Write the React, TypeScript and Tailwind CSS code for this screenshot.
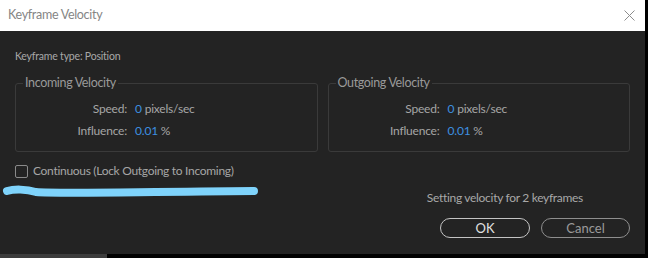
import React from 'react';

const font = { fontFamily: 'Lato, "Noto Sans", sans-serif' };

const VelocityGroup: React.FC<{ title: string }> = ({ title }) => (
  <fieldset className="w-[303px] h-[76px] border border-[#3a3a3a] rounded-[3px] px-[8px]">
    <legend className="px-[2px] ml-[-1px] text-[12.5px] leading-[14px] tracking-[-0.35px] text-[#9a9a9a]">{title}</legend>
    <div className="grid grid-cols-[103px_1fr] gap-x-[8px] gap-y-[5px] mt-[10px] text-[12px] leading-[17px] tracking-[-0.2px]">
      <span className="text-right text-[#a6a6a6]">Speed:</span>
      <span className="text-[#a6a6a6]">
        <span className="text-[#3d8fe0]">0</span> pixels/sec
      </span>
      <span className="text-right text-[#a6a6a6]">Influence:</span>
      <span className="text-[#a6a6a6]">
        <span className="text-[#3d8fe0]">0.01</span> %
      </span>
    </div>
  </fieldset>
);

export default function App() {
  return (
    <div className="w-[648px] h-[258px] bg-black relative overflow-hidden" style={font}>
      <div className="w-[645px] h-[254px] flex flex-col">
        {/* Title bar */}
        <div className="h-[31px] bg-white flex items-center justify-between pl-[8px] pr-[10px]">
          <span className="text-[12.5px] tracking-[-0.3px] text-[#858585]">Keyframe Velocity</span>
          <svg width="11" height="11" viewBox="0 0 11 11" className="text-[#8c8c8c]">
            <path d="M0.5 0.5 L10.5 10.5 M10.5 0.5 L0.5 10.5" stroke="currentColor" strokeWidth="1" fill="none" />
          </svg>
        </div>

        {/* Body */}
        <div className="flex-1 bg-[#232323] px-[15px] pt-[18px]">
          <div className="text-[10.5px] leading-[14px] tracking-[-0.2px] text-[#a8a8a8]">Keyframe type: Position</div>
          <div className="flex gap-[10px] mt-[13px]">
            <VelocityGroup title="Incoming Velocity" />
            <VelocityGroup title="Outgoing Velocity" />
          </div>
          <div className="flex items-center gap-[5px] mt-[11px]">
            <div className="w-[13px] h-[13px] border border-[#8a8a8a] rounded-[2px]" />
            <span className="text-[12px] leading-[16px] tracking-[-0.3px] text-[#a6a6a6]">Continuous (Lock Outgoing to Incoming)</span>
          </div>
          <div className="flex flex-col items-end mt-[11px]">
            <span className="text-[12px] leading-[16px] tracking-[-0.3px] text-[#a8a8a8] mr-[47px]">Setting velocity for 2 keyframes</span>
            <div className="flex gap-[11px] mt-[12px]">
              <button className="w-[90px] h-[20px] rounded-full border border-[#c4c4c4] text-[13px] leading-[18px] text-[#e0e0e0]">OK</button>
              <button className="w-[89px] h-[20px] rounded-full border border-[#8e8e8e] text-[13px] leading-[18px] text-[#9a9a9a]">Cancel</button>
            </div>
          </div>
        </div>
      </div>
      <div className="absolute left-0 bottom-0 w-[107px] h-[4px] bg-[#3c3c3c]" />

      {/* marker scribble over the dialog */}
      <svg className="absolute left-0 top-[182px]" width="264" height="18" viewBox="0 0 264 18">
        <path d="M7 9 C 14 7, 26 7, 36 10 C 60 12, 120 10, 254 9" stroke="#7fd3fb" strokeWidth="8" strokeLinecap="round" fill="none" />
      </svg>
    </div>
  );
}
